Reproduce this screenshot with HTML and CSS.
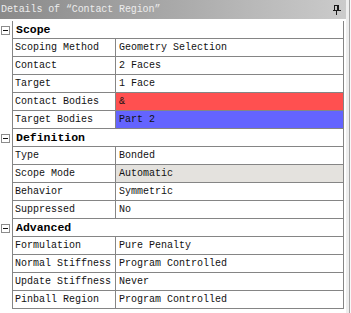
FILE: index.html
```html
<!DOCTYPE html>
<html>
<head>
    <title>Details of Contact Region</title>
    <link rel="stylesheet" href="styles.css">
</head>
<body>
    <div class="window">
        <div class="main">
            <div class="titlebar">
                <span class="title-text">Details of “Contact Region”</span>
                <svg class="pin" width="8" height="10" viewBox="0 0 8 10">
                    <rect x="1.5" y="0.5" width="4" height="5" fill="none" stroke="#1a1a1a"/>
                    <rect x="4" y="0" width="2" height="6" fill="#1a1a1a"/>
                    <rect x="0" y="5" width="8" height="1" fill="#1a1a1a"/>
                    <rect x="3" y="6" width="1" height="4" fill="#1a1a1a"/>
                </svg>
            </div>
            <div class="grid">
                <div class="row group">
                    <div class="gut"><span class="toggle"></span></div>
                    <div class="cells"><div class="head">Scope</div></div>
                </div>
                <div class="row">
                    <div class="gut"></div>
                    <div class="cells"><div class="name">Scoping Method</div><div class="value">Geometry Selection</div></div>
                </div>
                <div class="row">
                    <div class="gut"></div>
                    <div class="cells"><div class="name">Contact</div><div class="value">2 Faces</div></div>
                </div>
                <div class="row">
                    <div class="gut"></div>
                    <div class="cells"><div class="name">Target</div><div class="value">1 Face</div></div>
                </div>
                <div class="row">
                    <div class="gut"></div>
                    <div class="cells"><div class="name">Contact Bodies</div><div class="value red">&amp;</div></div>
                </div>
                <div class="row">
                    <div class="gut"></div>
                    <div class="cells"><div class="name">Target Bodies</div><div class="value blue">Part 2</div></div>
                </div>
                <div class="row group">
                    <div class="gut"><span class="toggle"></span></div>
                    <div class="cells"><div class="head">Definition</div></div>
                </div>
                <div class="row">
                    <div class="gut"></div>
                    <div class="cells"><div class="name">Type</div><div class="value">Bonded</div></div>
                </div>
                <div class="row">
                    <div class="gut"></div>
                    <div class="cells"><div class="name">Scope Mode</div><div class="value grey">Automatic</div></div>
                </div>
                <div class="row">
                    <div class="gut"></div>
                    <div class="cells"><div class="name">Behavior</div><div class="value">Symmetric</div></div>
                </div>
                <div class="row">
                    <div class="gut"></div>
                    <div class="cells"><div class="name">Suppressed</div><div class="value">No</div></div>
                </div>
                <div class="row group">
                    <div class="gut"><span class="toggle"></span></div>
                    <div class="cells"><div class="head">Advanced</div></div>
                </div>
                <div class="row">
                    <div class="gut"></div>
                    <div class="cells"><div class="name">Formulation</div><div class="value">Pure Penalty</div></div>
                </div>
                <div class="row">
                    <div class="gut"></div>
                    <div class="cells"><div class="name">Normal Stiffness</div><div class="value">Program Controlled</div></div>
                </div>
                <div class="row">
                    <div class="gut"></div>
                    <div class="cells"><div class="name">Update Stiffness</div><div class="value">Never</div></div>
                </div>
                <div class="row">
                    <div class="gut"></div>
                    <div class="cells"><div class="name">Pinball Region</div><div class="value">Program Controlled</div></div>
                </div>
            </div>
        </div>
        <div class="edge"></div>
    </div>
</body>
</html>
```

FILE: styles.css
```css
body {
    margin: 0;
    background: #ffffff;
    font-family: "Liberation Mono", monospace;
    font-size: 10px;
    color: #111111;
}
.window {
    display: flex;
    width: 351px;
    height: 313px;
}
.main {
    width: 346px;
    display: flex;
    flex-direction: column;
}
.edge {
    width: 5px;
    background: linear-gradient(to right, #eeeeee 3px, #a4a4a4 3px, #a4a4a4 4px, #f8f8f8 4px);
}
.titlebar {
    height: 19px;
    display: flex;
    align-items: center;
    justify-content: space-between;
    padding: 0 5px 0 1px;
    background: linear-gradient(to right, #8a8a8a, #a9a9a9 50%, #cbcbcb);
}
.title-text {
    color: #ececec;
    letter-spacing: -0.1px;
}
.pin {
    display: block;
}
.grid {
    padding-top: 2px;
    width: 344px;
}
.row {
    display: flex;
    height: 18px;
}
.gut {
    width: 12px;
    display: flex;
    align-items: center;
    padding-left: 1px;
    box-sizing: border-box;
}
.toggle {
    width: 9px;
    height: 9px;
    box-sizing: border-box;
    border: 1px solid #8c8c8c;
    background: linear-gradient(#111111, #111111) center / 5px 1px no-repeat, #ffffff;
}
.cells {
    flex: 1;
    display: flex;
    border-left: 1px solid #858585;
    border-right: 1px solid #858585;
    border-bottom: 1px solid #858585;
    line-height: 17px;
    white-space: nowrap;
}
.name {
    width: 100px;
    padding-left: 2px;
    border-right: 1px solid #858585;
}
.value {
    flex: 1;
    padding-left: 3px;
}
.head {
    padding-left: 3px;
    font-weight: bold;
    font-size: 11.5px;
    color: #000000;
}
.red {
    background: #ff5050;
}
.blue {
    background: #6464ff;
}
.grey {
    background: #e4e2de;
}
```
